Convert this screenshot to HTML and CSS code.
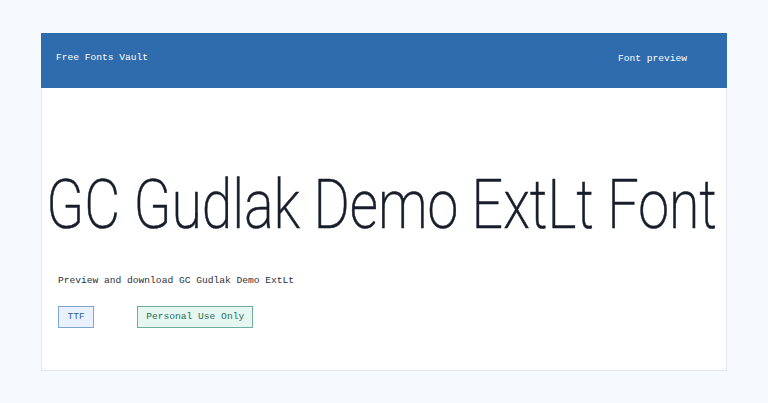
FILE: index.html
```html
<!DOCTYPE html>
<html lang="en">
<head>
<meta charset="utf-8">
<title>GC Gudlak Demo ExtLt Font - Free Fonts Vault</title>
<link rel="stylesheet" href="styles.css">
</head>
<body>
<main class="page">
  <section class="card">
    <header class="card-head">
      <span class="brand">Free Fonts Vault</span>
      <span class="head-label">Font preview</span>
    </header>
    <div class="card-body">
      <h1 class="sample">GC Gudlak Demo ExtLt Font</h1>
      <p class="desc">Preview and download GC Gudlak Demo ExtLt</p>
      <div class="tags">
        <span class="tag tag-format">TTF</span>
        <span class="tag tag-license">Personal Use Only</span>
      </div>
    </div>
  </section>
</main>
</body>
</html>
```
FILE: styles.css
```css
html, body {
  margin: 0;
  padding: 0;
}

body {
  background: #f6f9fd;
  font-family: "Liberation Mono", "DejaVu Sans Mono", monospace;
  color: #1d2433;
}

.page {
  padding: 33px 41px;
}

.card {
  background: #ffffff;
  border: 1px solid #e2e7ef;
  height: 336px;
  display: flex;
  flex-direction: column;
}

.card-head {
  background: #2f6cad;
  height: 55px;
  margin: -1px -1px 0;
  display: flex;
  align-items: center;
  justify-content: space-between;
  padding: 0 40px 6px 15px;
  box-sizing: border-box;
  color: #ffffff;
  font-size: 9.6px;
}

.head-label {
  padding-top: 2px;
}

.card-body {
  padding: 0 16px;
  display: flex;
  flex-direction: column;
}

/* specimen line: thin sans squeezed to the narrow proportions of the face */
.sample {
  align-self: center;
  width: max-content;
  margin: 84px 0 0 -4px;
  font-family: Roboto, sans-serif;
  font-weight: 200;
  font-size: 68px;
  line-height: 66px;
  letter-spacing: 0;
  color: #171d2b;
  -webkit-text-stroke: 0.6px #171d2b;
  white-space: nowrap;
  transform: scaleX(0.815);
}

.desc {
  margin: 36px 0 0;
  font-size: 9.6px;
  line-height: 14px;
  color: #283040;
}

.tags {
  display: flex;
  gap: 43px;
  margin-top: 18px;
}

.tag {
  font-size: 9.6px;
  line-height: 20px;
  padding: 0 8px;
  border: 1px solid;
}

.tag-format {
  padding: 0 8.5px;
  background: #e8f1fd;
  border-color: #7ea4d2;
  color: #2e5f99;
}

.tag-license {
  background: #e6f6f1;
  border-color: #6fae9d;
  color: #1e6f5b;
}
```
